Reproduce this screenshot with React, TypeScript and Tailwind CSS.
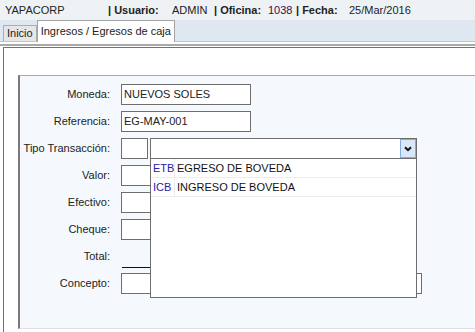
import { useState } from 'react';

const rows = [
  { code: 'ETB', name: 'EGRESO DE BOVEDA' },
  { code: 'ICB', name: 'INGRESO DE BOVEDA' },
];

function Field({ label, children }: { label: string; children: React.ReactNode }) {
  return (
    <div className="flex items-center h-[21px] mb-[6px]">
      <div className="w-[90px] text-right">{label}</div>
      <div className="ml-[11px] flex items-center">{children}</div>
    </div>
  );
}

function TextBox({ value = '', w = 'w-[130px]' }: { value?: string; w?: string }) {
  return (
    <div className={`${w} h-[21px] border border-[#6e6e6e] bg-white px-[2px] leading-[19px] whitespace-nowrap overflow-hidden`}>
      {value}
    </div>
  );
}

export default function App() {
  const [open] = useState(true);

  return (
    <div className="w-[475px] h-[332px] overflow-hidden bg-white font-['Liberation_Sans',Arial,sans-serif] text-[11px] text-[#222]">
      {/* header */}
      <div className="h-[20px] bg-[#eef2f5] flex items-center whitespace-nowrap">
        <span className="w-[108px] pl-[5px]">YAPACORP</span>
        <span className="w-[64px] font-bold">| Usuario:</span>
        <span className="w-[42px]">ADMIN</span>
        <span className="w-[54px] font-bold">| Oficina:</span>
        <span className="w-[28px] text-[#3c0a4e]">1038</span>
        <span className="w-[53px] font-bold">| Fecha:</span>
        <span>25/Mar/2016</span>
      </div>

      {/* tabs */}
      <div className="h-[22px] bg-[#dfe8f1] border-b border-[#c4c4c4] flex items-end pl-[3px]">
        <div className="h-[16px] px-[3px] bg-[#e6e6e6] border border-b-0 border-[#adadad] leading-[15px]">
          Inicio
        </div>
        <div className="h-[22px] -mb-px px-[3px] bg-white border border-b-0 border-[#a3a3a3] leading-[20px]">
          Ingresos / Egresos de caja
        </div>
      </div>
      <div className="h-[2px]" />
      <div className="h-[2px] bg-[#a9a9a9]" />
      <div className="h-[1px]" />

      {/* page frame */}
      <div className="ml-[3px] h-[285px] border-t border-l border-[#727272] bg-white pt-[27px]">
        <div className="ml-[14px] h-[254px] border-t border-[#a8a8a8] border-l-2 border-l-[#7a7a7a] border-b border-b-[#dedede] bg-[#f5f9fd] pt-[8px]">
          <Field label="Moneda:">
            <TextBox value="NUEVOS SOLES" />
          </Field>
          <Field label="Referencia:">
            <TextBox value="EG-MAY-001" />
          </Field>
          <Field label="Tipo Transacción:">
            <TextBox w="w-[27px]" />
            <div className="relative ml-[2px] w-[267px] h-[21px] border border-[#6e6e6e] bg-white flex justify-end">
              <div className="w-[16px] h-[19px] border border-[#82afe0] bg-[#d9e8f8] flex items-center justify-center">
                <svg width="8" height="6" viewBox="0 0 8 6">
                  <path d="M1 1.2 L4 4.2 L7 1.2" fill="none" stroke="#111" strokeWidth="2" />
                </svg>
              </div>
              {open && (
                <div className="absolute left-[-1px] top-[19px] z-10 w-[267px] h-[140px] border border-[#6e6e6e] bg-white">
                  {rows.map((r) => (
                    <div key={r.code} className="flex h-[19px] border-b border-[#ececec] leading-[18px]">
                      <div className="w-[24px] pl-[2px] border-r border-[#ececec] text-[#2323a8]">{r.code}</div>
                      <div className="pl-[2px] text-[#111]">{r.name}</div>
                    </div>
                  ))}
                </div>
              )}
            </div>
          </Field>
          <Field label="Valor:">
            <TextBox />
          </Field>
          <Field label="Efectivo:">
            <TextBox />
          </Field>
          <Field label="Cheque:">
            <TextBox />
          </Field>
          <div className="flex h-[27px]">
            <div className="w-[90px] text-right pt-[2px]">Total:</div>
            <div className="ml-[12px] w-[130px] h-[22px] border-b border-[#111]" />
          </div>
          <Field label="Concepto:">
            <TextBox w="w-[301px]" />
          </Field>
        </div>
      </div>
    </div>
  );
}
